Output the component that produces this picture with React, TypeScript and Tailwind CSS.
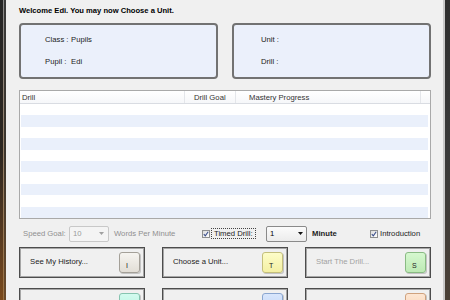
import React from "react";

const rows = Array.from({ length: 10 });

type KeyProps = { letter?: string; from: string; to: string; edge: string };

function Key({ letter, from, to, edge }: KeyProps) {
  return (
    <div
      className={`w-[21px] h-[21px] rounded-[3px] border flex items-end pl-[6px] pb-[2px] text-[7px] leading-[8px] text-[#222] bg-gradient-to-b ${from} ${to} ${edge} shadow-[1px_1px_0_rgba(0,0,0,0.18)]`}
    >
      {letter}
    </div>
  );
}

function Check() {
  return (
    <div className="w-[8px] h-[8px] border border-[#8e8f8f] bg-gradient-to-br from-[#dcdcdc] to-[#ffffff] flex items-center justify-center">
      <svg width="6" height="6" viewBox="0 0 6 6">
        <path d="M0.8 3.2 L2.3 4.8 L5.2 0.8" fill="none" stroke="#3b4f8c" strokeWidth="1.1" />
      </svg>
    </div>
  );
}

function Arrow({ color }: { color: string }) {
  return (
    <svg width="5" height="3" viewBox="0 0 5 3">
      <path d="M0 0 L5 0 L2.5 3 Z" fill={color} />
    </svg>
  );
}

function Button({
  label,
  disabled,
  keyEl,
}: {
  label?: string;
  disabled?: boolean;
  keyEl: React.ReactNode;
}) {
  return (
    <div className="w-[126px] h-[31px] border border-[#4c4c4c] shadow-[inset_0_0_0_1px_#a6a6a6] bg-[#f0f0f0] flex items-center justify-between pl-[10px] pr-[4px]">
      <span className={disabled ? "text-[#a2a2a2]" : "text-[#1c1c1c]"}>{label}</span>
      {keyEl}
    </div>
  );
}

export default function App() {
  return (
    <div className="w-[450px] h-[300px] overflow-hidden flex bg-[#f0f0f0] font-['Liberation_Sans',Arial,sans-serif] text-[7.7px] leading-[10px] text-[#1c1c1c]">
      {/* left window edge */}
      <div className="w-[6px] h-full flex">
        <div className="w-[3px] h-full bg-gradient-to-b from-[#262626] via-[#2c2620] to-[#7a4a1c]" />
        <div className="w-[1px] h-full bg-gradient-to-b from-[#8a8a8a] to-[#9a7040]" />
        <div className="w-[2px] h-full bg-gradient-to-b from-[#3a3a3a] via-[#3a342c] to-[#6a4a2a]" />
      </div>

      <div className="w-[437px] h-full pl-[13px] pt-[6px] flex flex-col">
        <div className="h-[10px] font-bold text-[7.6px] text-black">
          Welcome Edi. You may now Choose a Unit.
        </div>

        {/* info panels */}
        <div className="mt-[7px] w-[412px] flex gap-[14px]">
          <div className="w-[199px] h-[56px] rounded-[4px] border-2 border-[#727272] bg-[#ebf0fb] pl-[24px] pt-[10px] flex flex-col gap-[12px]">
            <div className="flex">
              <span className="w-[26px] whitespace-nowrap">Class :</span>
              <span>Pupils</span>
            </div>
            <div className="flex">
              <span className="w-[26px] whitespace-nowrap">Pupil :</span>
              <span>Edi</span>
            </div>
          </div>
          <div className="w-[199px] h-[56px] rounded-[4px] border-2 border-[#727272] bg-[#ebf0fb] pl-[27px] pt-[10px] flex flex-col gap-[12px]">
            <span className="text-[#222]">Unit :</span>
            <span className="text-[#222]">Drill :</span>
          </div>
        </div>

        {/* drill table */}
        <div className="mt-[11px] w-[412px] h-[129px] border border-[#a9a9a9] bg-white flex flex-col">
          <div className="h-[13px] flex border-b border-[#d9dce2] bg-gradient-to-b from-[#ffffff] to-[#f6f7f9] text-[#333]">
            <div className="w-[165px] pl-[2px] pt-[2px] border-r border-[#e4e6ea]">Drill</div>
            <div className="w-[51px] pl-[9px] pt-[2px] border-r border-[#e4e6ea]">Drill Goal</div>
            <div className="w-[185px] pl-[13px] pt-[2px] border-r border-[#e4e6ea]">Mastery Progress</div>
            <div className="flex-1" />
          </div>
          <div className="flex-1 px-[1px] pr-[2px] flex flex-col">
            {rows.map((_, i) => (
              <div
                key={i}
                className={`h-[11.4px] ${i % 2 === 1 ? "bg-[#eaf0fb]" : "bg-white"}`}
              />
            ))}
          </div>
        </div>

        {/* speed goal controls */}
        <div className="mt-[7px] h-[16px] flex items-center">
          <span className="w-[50px] pl-[4px] text-[#8f8f8f]">Speed Goal:</span>
          <div className="w-[40px] h-[16px] rounded-[2px] border border-[#c8c8c8] bg-[#f4f4f4] flex items-center justify-between pl-[3px] pr-[4px] text-[#9a9a9a]">
            <span>10</span>
            <Arrow color="#a0a0a0" />
          </div>
          <span className="ml-[5px] w-[88px] text-[#8f8f8f]">Words Per Minute</span>
          <Check />
          <span className="ml-[1px] w-[45px] h-[11px] border border-dotted border-[#444] pl-[2px] leading-[9px]">
            Timed Drill:
          </span>
          <div className="ml-[10px] w-[41px] h-[16px] rounded-[2px] border border-[#8a8a8a] bg-gradient-to-b from-[#fbfbfb] to-[#ececec] flex items-center justify-between pl-[3px] pr-[3px]">
            <span className="text-black">1</span>
            <Arrow color="#111" />
          </div>
          <span className="ml-[5px] w-[58px] font-bold">Minute</span>
          <Check />
          <span className="ml-[2px]">Introduction</span>
        </div>

        {/* buttons */}
        <div className="mt-[5px] flex gap-[17px]">
          <Button
            label="See My History..."
            keyEl={<Key letter="I" from="from-[#f6f4f0]" to="to-[#e2ded6]" edge="border-[#a4a098]" />}
          />
          <Button
            label="Choose a Unit..."
            keyEl={<Key letter="T" from="from-[#fdfdc8]" to="to-[#f4f0a4]" edge="border-[#c4bf7c]" />}
          />
          <Button
            label="Start The Drill..."
            disabled
            keyEl={<Key letter="S" from="from-[#d6f8d0]" to="to-[#bdeab4]" edge="border-[#8abb84]" />}
          />
        </div>
        {/* second row, cut off by the window bottom */}
        <div className="mt-[10px] flex gap-[17px]">
          <Button keyEl={<Key from="from-[#d2fbef]" to="to-[#b8f2e0]" edge="border-[#86c4b0]" />} />
          <Button keyEl={<Key from="from-[#d8e6fc]" to="to-[#bfd4f6]" edge="border-[#8aa6d0]" />} />
          <Button keyEl={<Key from="from-[#fde6d2]" to="to-[#f7d2b4]" edge="border-[#cfa27e]" />} />
        </div>
      </div>

      {/* right window edge */}
      <div className="flex-1 h-full flex">
        <div className="w-[2px] h-full bg-[#c9c9c9]" />
        <div className="flex-1 h-full bg-gradient-to-b from-[#2e2e2e] via-[#3a3a3a] to-[#4a4036]" />
      </div>
    </div>
  );
}
